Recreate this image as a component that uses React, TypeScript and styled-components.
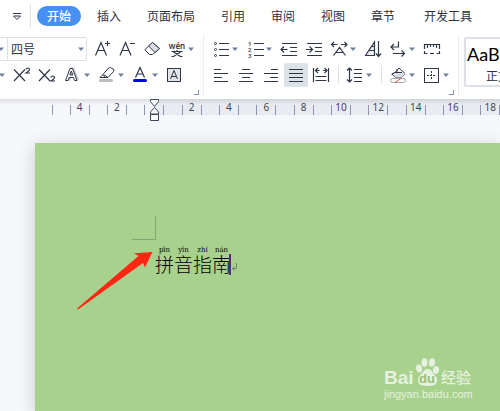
import React from "react";
import styled, { createGlobalStyle } from "styled-components";

const GlobalStyle = createGlobalStyle`
  * { box-sizing: border-box; }
  body { margin: 0; overflow: hidden; background: #f5f7fa; }
  button, select { font: inherit; color: inherit; border: 0; background: none; padding: 0; margin: 0; }
`;

const INK = "#2f3747";
const CARET = "#6f7f9c";

const Shell = styled.div`
  display: flex;
  flex-direction: column;
  min-height: 100vh;
  overflow: hidden;
  color: #2b3240;
  font-family: "Liberation Sans", "Noto Sans CJK SC", sans-serif;
  font-size: 12px;
`;

const Tabs = styled.nav`
  display: flex;
  align-items: center;
  height: 32px;
  flex: none;
  background: #fff;
  white-space: nowrap;
`;

const QuickMenu = styled.button`
  display: flex;
  justify-content: flex-end;
  width: 31px;
  height: 24px;
  padding-right: 9px;
  border-right: 1px solid #dcdfe6;
  flex: none;
`;

const Tab = styled.button<{ $active?: boolean; $apart?: boolean }>`
  flex: none;
  height: 20px;
  line-height: 20px;
  padding: 1px ${(p) => (p.$active ? 10 : 13)}px 0;
  margin-left: ${(p) => (p.$active ? 6 : p.$apart ? 3 : 0)}px;
  margin-right: ${(p) => (p.$active ? 3 : 0)}px;
  border-radius: 10px;
  color: ${(p) => (p.$active ? "#fff" : "#2b3240")};
  background: ${(p) => (p.$active ? "#4790f3" : "transparent")};
  font-weight: ${(p) => (p.$active ? 500 : 400)};
`;

const Ribbon = styled.div`
  display: flex;
  flex: none;
  background: #fff;
  padding: 3px 0;
`;

const Group = styled.section<{ $indent?: number }>`
  position: relative;
  display: flex;
  flex-direction: column;
  flex: none;
  gap: 2px;
  padding: 2px 9px 9px ${(p) => p.$indent ?? 0}px;
  border-right: 1px solid #eceef1;
`;

const Row = styled.div`
  display: flex;
  align-items: center;
  gap: 9px;
  height: 24px;
`;

const Tool = styled.button<{ $on?: boolean }>`
  display: flex;
  flex: none;
  gap: 3px;
  height: 24px;
  padding: 0 ${(p) => (p.$on ? 4 : 0)}px;
  margin: 0 ${(p) => (p.$on ? -4 : 0)}px;
  border-radius: 2px;
  background: ${(p) => (p.$on ? "#dde2e7" : "transparent")};
`;

const Glyph = styled.svg`
  display: block;
  flex: none;
  overflow: visible;
  fill: none;
  stroke: ${INK};
  stroke-width: 1;
  text {
    fill: ${INK};
    stroke: none;
    font-family: "Noto Sans", sans-serif;
    font-weight: 600;
  }
`;

const Divider = styled.span`
  width: 1px;
  height: 18px;
  margin-right: -1px;
  background: #dcdfe4;
`;

const Combos = styled.div`
  display: flex;
  height: 24px;
  width: 87px;
  margin-right: -2px;
  border: 1px solid #dcdfe6;
  border-left: 0;
  border-radius: 0 2px 2px 0;
`;

const Combo = styled.label<{ $first?: boolean }>`
  display: flex;
  align-items: center;
  flex: ${(p) => (p.$first ? "none" : 1)};
  width: ${(p) => (p.$first ? "8px" : "auto")};
  padding-right: ${(p) => (p.$first ? 3 : 2)}px;
  justify-content: flex-end;
  border-right: ${(p) => (p.$first ? "1px solid #dcdfe6" : 0)};
  select {
    appearance: none;
    outline: none;
    flex: 1;
    min-width: 0;
    width: 0;
    height: 22px;
    padding-top: 1px;
    padding-left: ${(p) => (p.$first ? 0 : 3)}px;
    font-size: 12px;
  }
`;

const LauncherButton = styled.button`
  position: absolute;
  right: 4px;
  bottom: 1px;
  width: 5px;
  height: 5px;
  border-right: 1px solid #8390a8;
  border-bottom: 1px solid #8390a8;
`;

const Styles = styled.section`
  flex: 1;
  min-width: 0;
  padding: 2px 0 0 5px;
  overflow: hidden;
`;

const StyleCard = styled.button`
  display: block;
  width: 74px;
  height: 50px;
  border: 2px solid #dcdfe6;
  border-radius: 2px;
  text-align: center;
  white-space: nowrap;
  overflow: hidden;
`;

const Sample = styled.span`
  display: block;
  height: 30px;
  line-height: 30px;
  font-family: Lato, sans-serif;
  font-size: 18px;
  color: #000;
  text-align: left;
  padding-left: 1px;
`;

const StyleName = styled.span`
  display: block;
  line-height: 16px;
  padding-right: 6px;
`;

const Ruler = styled.div`
  position: relative;
  display: flex;
  flex: none;
  height: 16px;
  padding-left: 52px;
  overflow: visible;
  background: linear-gradient(#0000001a, #00000008 4px, transparent 6px),
    linear-gradient(90deg, #f5f7fa 155px, #e8ebf1 155px);
`;

const FirstTick = styled.span`
  flex: none;
  width: 9px;
  height: 10px;
  margin-top: 6px;
  border-left: 1px solid #8a98b0;
`;

const Scale = styled.div`
  display: grid;
  grid-template-columns: repeat(12, 1fr);
  flex: none;
  width: 448px;
`;

const Mark = styled.span`
  justify-self: center;
  width: 53%;
  height: 10px;
  margin-top: 6px;
  border: solid #8a98b0;
  border-width: 0 1px;
  display: flex;
  justify-content: center;
  font-family: "Noto Sans", sans-serif;
  font-size: 10px;
  line-height: 4px;
  color: #3f485c;
`;

const IndentMarker = styled.svg`
  position: absolute;
  left: 150px;
  top: 0;
  fill: #fff;
  stroke: #3d4659;
`;

const Workspace = styled.main`
  display: flex;
  flex: 1;
  padding: 28px 0 0 35px;
  overflow: hidden;
`;

const Page = styled.article`
  position: relative;
  flex: 1;
  padding: 73px 0 0 97px;
  background: #a9d18e;
  box-shadow: 0 4px 16px #00000030;
`;

const CropMark = styled.div`
  width: 24px;
  height: 24px;
  border: solid #83a670;
  border-width: 0 1px 1px 0;
`;

const Paragraph = styled.p`
  display: flex;
  align-items: flex-end;
  margin: 6px 0 0 23px;
  color: #000;
`;

const Syllable = styled.span`
  display: flex;
  flex-direction: column;
  align-items: center;
  width: 19px;
`;

const Pinyin = styled.span`
  font-family: "DejaVu Serif", serif;
  font-size: 7px;
  line-height: 9px;
`;

const Hanzi = styled.span`
  font-family: "Noto Sans CJK SC", sans-serif;
  font-weight: 300;
  font-size: 19px;
  line-height: 18px;
  padding-bottom: 2px;
`;

const TextCursor = styled.span`
  width: 2px;
  height: 21px;
  margin-left: -2px;
  background: #562c6e;
`;

const Return = styled.svg`
  margin-bottom: 3px;
  fill: none;
  stroke: #71846a;
`;

const Pointer = styled.svg`
  position: absolute;
  left: 41px;
  top: 108px;
  fill: #ff2613;
`;

const Watermark = styled.div`
  position: absolute;
  right: 28px;
  bottom: 9px;
  width: 88px;
  color: #e6f2df;
`;

const Brand = styled.div`
  display: flex;
  align-items: flex-end;
  height: 28px;
  font-weight: 700;
  white-space: nowrap;
`;

const BrandLatin = styled.span`
  width: 32px;
  font-size: 19px;
  line-height: 17px;
`;

const BrandHan = styled.span`
  margin-left: 2px;
  font-size: 15px;
  font-weight: 500;
  line-height: 17px;
`;

const Site = styled.div`
  font-size: 11px;
  line-height: 16px;
  white-space: nowrap;
`;

const Caret = () => (
  <Glyph width="6" height="24" aria-hidden>
    <path d="M0 10.500h6l-3 3.500z" fill={CARET} stroke="none" />
  </Glyph>
);

type ToolProps = { label: string; menu?: boolean; on?: boolean; w?: number; children?: React.ReactNode };

const ToolButton = ({ label, menu, on, w = 16, children }: ToolProps) => (
  <Tool $on={on} aria-label={label} aria-pressed={on}>
    <Glyph width={w} height="24" aria-hidden>{children}</Glyph>
    {menu && <Caret />}
  </Tool>
);

const Launcher = ({ label }: { label: string }) => <LauncherButton aria-label={label} />;

const Lines = ({ rows }: { rows: [number, number][] }) => (
  <path d={rows.map(([a, b], i) => `M${a} ${6.5 + i * 4}H${b}`).join("")} strokeWidth="1.2" />
);

const tabs = ["插入", "页面布局", "引用", "审阅", "视图", "章节"];
const marks = ["4", "2", "", "2", "4", "6", "8", "10", "12", "14", "16", "18"];
const words = [["pīn", "拼"], ["yīn", "音"], ["zhí", "指"], ["nán", "南"]];

export default function App() {
  return (
    <Shell>
      <GlobalStyle />
      <Tabs>
        <QuickMenu aria-label="自定义快速访问工具栏">
          <Glyph width="8" height="24" aria-hidden>
            <path d="M0 9.500h8M0.500 12l3.500 3.500L7.500 12z" />
          </Glyph>
        </QuickMenu>
        <Tab $active>开始</Tab>
        {tabs.map((t) => <Tab key={t}>{t}</Tab>)}
        <Tab $apart>开发工具</Tab>
      </Tabs>

      <Ribbon>
        <Group>
          <Row>
            <Combos>
              <Combo $first>
                <select aria-label="字体"><option>宋体</option></select>
                <Caret />
              </Combo>
              <Combo>
                <select aria-label="字号"><option>四号</option></select>
                <Caret />
              </Combo>
            </Combos>
            <ToolButton label="增大字号">
              <path d="M1.5 18.5L7 5.5l5.5 13M3.5 13.5h7M11 6.5h5M13.5 4v5" strokeWidth="1.2" />
            </ToolButton>
            <ToolButton label="减小字号">
              <path d="M1 18.5L6.5 5.5l5.5 13M3 13.5h7M11 6.5h5" strokeWidth="1.2" />
            </ToolButton>
            <ToolButton label="清除格式">
              <path d="M8.5 5.5L15.500 11.500 8.500 17.500H5.500L0.800 12.800z" />
              <path d="M8.500 5.500L15.500 11.500 11 15.500 4.500 9z" fill="#d9dde3" />
            </ToolButton>
            <ToolButton label="拼音指南" menu>
              <text x="8" y="12" fontSize="8" textAnchor="middle">wén</text>
              <path d="M2.500 14.500h11M8 13v2M4.500 15l7 4.500M11.500 15l-7 4.500M2.500 19.500h3M10.500 19.500h3" strokeWidth="1.200" />
            </ToolButton>
          </Row>
          <Row>
            <ToolButton label="下划线" w={4}>
              <path d="M-1 10.500h6l-3 3.500z" fill={CARET} stroke="none" />
            </ToolButton>
            <ToolButton label="上标" w={17}>
              <path d="M1 6.500L12 18M12 6.500L1 18M13 6.500c0-2 3.500-2 3.500 0 0 1-3.500 3.500-3.500 3.500h4" strokeWidth="1.200" />
            </ToolButton>
            <ToolButton label="下标" w={17}>
              <path d="M0 6.500L11 18M11 6.500L0 18M12 14.500c0-2 3.500-2 3.500 0 0 1-3.500 3.500-3.500 3.500h4" strokeWidth="1.200" />
            </ToolButton>
            <ToolButton label="文字效果" menu>
              <path d="M3 17.500L7.500 6l4.500 11.500" stroke="#c3c8d0" strokeWidth="4" strokeLinejoin="round" />
              <path d="M0.500 17.500L5 5.500h2.500l4.500 12H9.500l-1-3H4l-1 3zM4.800 12h3L6.300 8z" fill="#fff" strokeLinejoin="round" />
            </ToolButton>
            <ToolButton label="突出显示" menu>
              <path d="M1 14.500H6L4 11.500zM4 11.500L9.500 5l2-0.500 3.500 2-0.500 2L9 14.500H6M5 12l3.500 2" fill="#fff" />
              <path d="M1.500 17.500h11" stroke="#bdbdbd" strokeWidth="3" strokeLinecap="round" />
            </ToolButton>
            <ToolButton label="字体颜色" menu>
              <path d="M2.500 14.500L7 4.500l4.500 10M4 11h6" strokeWidth="1.200" />
              <path d="M1.500 17.500h11" stroke="#0000ff" strokeWidth="3" strokeLinecap="round" />
            </ToolButton>
            <ToolButton label="字符底纹">
              <rect x="0.500" y="5.500" width="13" height="13" fill="#e2e5ea" />
              <path d="M3.500 16L7 7.500l3.500 8.500M4.500 13.500h5" />
            </ToolButton>
          </Row>
          <Launcher label="字体设置" />
        </Group>

        <Group $indent={9}>
          <Row>
            <ToolButton label="项目符号" menu>
              <path d="M6 6.500h10M6 12.500h10M6 18.500h10" strokeWidth="1.200" />
              {[6.5, 12.5, 18.5].map((y) => <circle key={y} cx="2.500" cy={y} r="1" />)}
            </ToolButton>
            <ToolButton label="编号" menu>
              <path d="M7 6.500h10M7 12.500h10M7 18.500h10" strokeWidth="1.200" />
              <text x="1" y="9" fontSize="6">1</text>
              <text x="1" y="15" fontSize="6">2</text>
              <text x="1" y="21" fontSize="6">3</text>
            </ToolButton>
            <ToolButton label="减少缩进量">
              <path d="M1 6.500h15M9 10.500h7M9 14.500h7M1 18.500h15M0.500 12.500h6M3 9.500l-3 3 3 3" strokeWidth="1.200" />
            </ToolButton>
            <ToolButton label="增加缩进量">
              <path d="M1 6.500h15M9 10.500h7M9 14.500h7M1 18.500h15M0 12.500h6M3.500 9.500l3 3-3 3" strokeWidth="1.200" />
            </ToolButton>
            <ToolButton label="中文版式" menu>
              <path d="M2.500 18.500L8.500 10.500l6 8M5 15.500h7M0.500 7.500h6M3 5l-2.500 2.500L3 10M10 7.500h6M13.500 5L16 7.500 13.500 10" strokeWidth="1.200" />
            </ToolButton>
            <ToolButton label="排序">
              <path d="M0.500 18.500L9.500 5v13.500zM3.500 13.500h6M6 9.500h3.500" strokeWidth="1.200" fill="#eef0f3" />
              <path d="M13.500 4v15M11 16.500l2.500 3 2.500-3" strokeWidth="1.200" />
            </ToolButton>
            <ToolButton label="换行" menu>
              <path d="M8.500 4.500V10H1.500M4 7l-3 3 3 3M3 16.500h12M11.500 13.500l3 3-3 3" strokeWidth="1.200" />
            </ToolButton>
            <ToolButton label="标尺">
              <path d="M0.500 12V7.500h15V12M3.500 8v3M6.500 8v2M9.500 8v2M12.500 8v3M0.500 14v2.500h3M6 16.500h4M12.500 16.500h3V14" strokeWidth="1.200" />
            </ToolButton>
          </Row>
          <Row>
            <ToolButton label="左对齐"><Lines rows={[[1, 8], [1, 15], [1, 9], [1, 15]]} /></ToolButton>
            <ToolButton label="居中对齐"><Lines rows={[[4, 12], [1, 15], [4, 12], [1, 15]]} /></ToolButton>
            <ToolButton label="右对齐"><Lines rows={[[8, 15], [1, 15], [7, 15], [1, 15]]} /></ToolButton>
            <ToolButton label="两端对齐" on><Lines rows={[[1, 15], [1, 15], [1, 15], [1, 15]]} /></ToolButton>
            <ToolButton label="分散对齐">
              <path d="M0.500 5v14M15.500 5v14M3 7.500h3.500M10 7.500h3.500M5 5L2.500 7.500 5 10M11.500 5l2.500 2.500-2.500 2.500M2.500 13.500h11M2.500 17.500h11" strokeWidth="1.200" />
            </ToolButton>
            <Divider />
            <ToolButton label="行距" menu>
              <path d="M2.500 5v14M0 7.500L2.500 5 5 7.500M0 16.500L2.500 19 5 16.500M7 6.500h8M7 10.500h8M7 14.500h8M7 18.500h8" strokeWidth="1.200" />
            </ToolButton>
            <Divider />
            <ToolButton label="底纹颜色" menu>
              <path d="M4.500 10L9 5l6 5.500-3 3.500H5L2 11z" fill="#fff" />
              <path d="M4 9.500l8 0.500 3 0.500-3 3.500H5z" fill="#d9dde3" stroke="none" />
              <path d="M1.500 11.500l3-2h7.500M7 6v3.500" />
              <rect x="0.500" y="15.500" width="15" height="4" rx="2" fill="#fff" stroke="#9da3ad" />
              <path d="M5 19.500l6-4" stroke="#e05a4f" />
            </ToolButton>
            <ToolButton label="边框" menu>
              <rect x="0.500" y="5.500" width="14" height="14" />
              <path d="M7.500 8v9M3 12.500h9" strokeDasharray="2 1" />
            </ToolButton>
          </Row>
          <Launcher label="段落设置" />
        </Group>

        <Styles>
          <StyleCard>
            <Sample>AaBbCcDd</Sample>
            <StyleName>正文</StyleName>
          </StyleCard>
        </Styles>
      </Ribbon>

      <Ruler>
        <FirstTick />
        <Scale>
          {marks.map((m, i) => <Mark key={i}>{m}</Mark>)}
        </Scale>
        <IndentMarker width="10" height="22" aria-hidden>
          <path d="M0.500 0.500h8v2L4.500 7.500 0.500 2.500zM4.500 8.500l4 4.500v2h-8v-2zM0.500 15.500h8v6h-8z" />
        </IndentMarker>
      </Ruler>

      <Workspace>
        <Page>
          <CropMark />
          <Paragraph>
            {words.map(([p, h]) => (
              <Syllable key={h}>
                <Pinyin>{p}</Pinyin>
                <Hanzi>{h}</Hanzi>
              </Syllable>
            ))}
            <TextCursor />
            <Return width="7" height="9" aria-hidden>
              <path d="M4.500 0.500h1v5h-4M3.500 3.500l-2 2 2 2" />
            </Return>
          </Paragraph>
          <Pointer width="78" height="60" aria-hidden>
            <path d="M76.500 1L69 16.500 67 12 2 58.500 1 57.500 62.500 5 58 2.200z" />
          </Pointer>
          <Watermark>
            <Brand>
              <BrandLatin>Bai</BrandLatin>
              <svg width="23" height="28" aria-hidden>
                <g fill="#e6f2df">
                  <ellipse cx="3" cy="10.500" rx="3" ry="4" transform="rotate(-12 3 10.500)" />
                  <ellipse cx="8.500" cy="4.500" rx="3" ry="4.300" />
                  <ellipse cx="16" cy="4.500" rx="3" ry="4.300" transform="rotate(10 16 4.500)" />
                  <ellipse cx="20" cy="12" rx="3" ry="4" transform="rotate(15 20 12)" />
                  <path d="M12 11c4 0 4 4 7 6.500s3 9-2 10c-3 .5-7 .5-10 0-6-1-6-7-3-10S8 11 12 11z" />
                </g>
                <text x="11" y="25" textAnchor="middle" fill="#94bf7a" fontFamily="Liberation Sans" fontSize="13" fontWeight="700">du</text>
              </svg>
              <BrandHan>经验</BrandHan>
            </Brand>
            <Site>jingyan.baidu.com</Site>
          </Watermark>
        </Page>
      </Workspace>
    </Shell>
  );
}
